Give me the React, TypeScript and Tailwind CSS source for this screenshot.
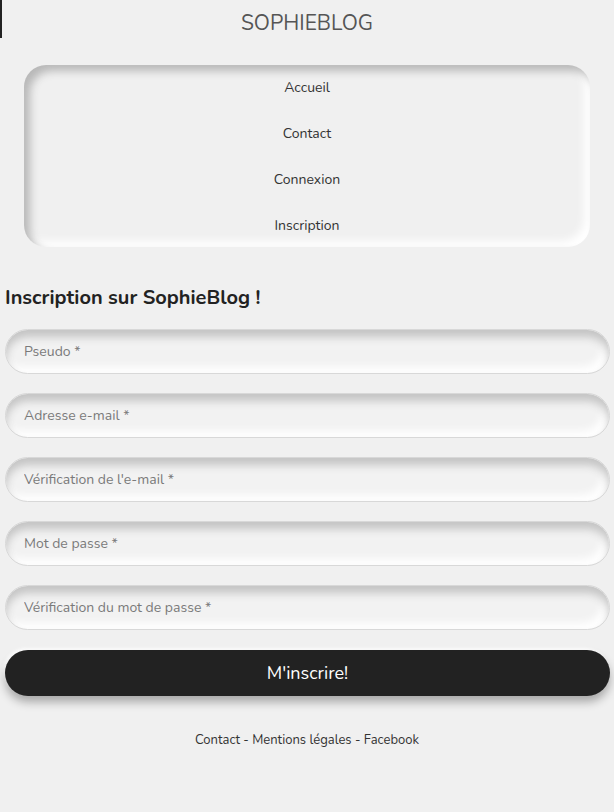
import React from "react";

const fields = [
  "Pseudo *",
  "Adresse e-mail *",
  "Vérification de l'e-mail *",
  "Mot de passe *",
  "Vérification du mot de passe *",
];

const links = ["Accueil", "Contact", "Connexion", "Inscription"];

export default function App() {
  return (
    <div className="min-h-[812px] bg-[#f0f0f0] text-[#333] font-['Nunito','Open_Sans','Liberation_Sans',sans-serif] relative">
      <div className="absolute left-0 top-0 w-[2px] h-[38px] bg-[#222]" />
      <header className="pt-[10px] text-center">
        <h1 className="text-[21px] leading-[26px] text-[#555]">SOPHIEBLOG</h1>
      </header>

      <nav className="mx-[24px] mt-[29px] rounded-[22px] bg-[#f0f0f0] shadow-[inset_6px_6px_8px_#b8b8b8,inset_-6px_-6px_8px_#ffffff] pt-[11px] pb-[9px]">
        <ul className="flex flex-col items-center gap-[22px]">
          {links.map((l) => (
            <li key={l} className="h-[24px] leading-[24px] text-[14px] text-[#333]">
              {l}
            </li>
          ))}
        </ul>
      </nav>

      <main className="pl-[5px] pr-[4px] pt-[38px]">
        <h2 className="text-[20px] font-bold text-[#222] leading-[26px]">
          Inscription sur SophieBlog !
        </h2>
        <form className="flex flex-col gap-[19px] mt-[18px]">
          {fields.map((f) => (
            <input
              key={f}
              placeholder={f}
              type="text"
              className="h-[45px] w-full rounded-full border border-[#d8d8d8] bg-[#f2f2f2] pl-[18px] text-[14px] placeholder:text-[#7a7a7a] outline-none shadow-[inset_0_7px_9px_#c4c4c4,inset_-6px_-6px_8px_#ffffff]"
            />
          ))}
          <button
            type="button"
            className="mt-[1px] h-[46px] w-full rounded-full bg-[#222] text-white text-[18px] shadow-[0_6px_10px_rgba(0,0,0,0.3),-2px_-2px_3px_#ffffff]"
          >
            M'inscrire!
          </button>
        </form>
      </main>

      <footer className="mt-[35px] text-center text-[13px] text-[#333]">
        Contact - Mentions légales - Facebook
      </footer>
    </div>
  );
}
